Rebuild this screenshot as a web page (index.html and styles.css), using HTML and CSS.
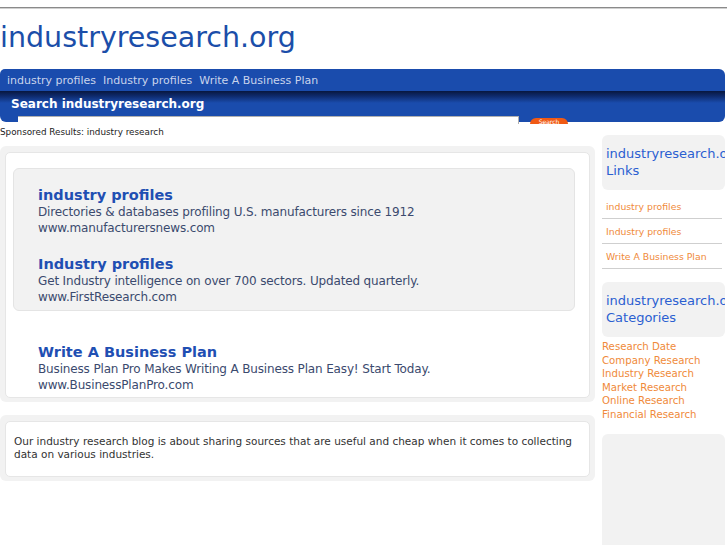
FILE: index.html
```html
<!DOCTYPE html>
<html lang="en">
<head>
    <meta charset="UTF-8">
    <title>industryresearch.org</title>
    <link rel="stylesheet" href="styles.css">
</head>
<body>
<div class="top-line"></div>
<div class="logo"><a href="">industryresearch.org</a></div>

<ul class="nav">
    <li><a href="">industry profiles</a></li>
    <li><a href="">Industry profiles</a></li>
    <li><a href="">Write A Business Plan</a></li>
</ul>

<div class="search">
    <div class="search-head">Search industryresearch.org</div>
    <div class="search-row">
        <input class="search-input" type="text" value="">
        <span class="search-btn">Search</span>
    </div>
</div>

<div class="page">
    <div class="main">
        <div class="sponsored">Sponsored Results: industry research</div>
        <div class="panel">
            <div class="panel-in">
                <div class="ads-top">
                    <div class="ad">
                        <a class="ad-title" href="">industry profiles</a>
                        <p>Directories &amp; databases profiling U.S. manufacturers since 1912</p>
                        <p>www.manufacturersnews.com</p>
                    </div>
                    <div class="ad">
                        <a class="ad-title" href="">Industry profiles</a>
                        <p>Get Industry intelligence on over 700 sectors. Updated quarterly.</p>
                        <p>www.FirstResearch.com</p>
                    </div>
                </div>
                <div class="ad ad-bottom">
                    <a class="ad-title" href="">Write A Business Plan</a>
                    <p>Business Plan Pro Makes Writing A Business Plan Easy! Start Today.</p>
                    <p>www.BusinessPlanPro.com</p>
                </div>
            </div>
        </div>
        <div class="panel panel-blog">
            <div class="panel-in blog">
                Our industry research blog is about sharing sources that are useful and cheap when it comes to collecting data on various industries.
            </div>
        </div>
    </div>

    <div class="side">
        <div class="side-box">industryresearch.org Links</div>
        <ul class="side-links">
            <li><a href="">industry profiles</a></li>
            <li><a href="">Industry profiles</a></li>
            <li><a href="">Write A Business Plan</a></li>
        </ul>
        <div class="side-box">industryresearch.org Categories</div>
        <ul class="side-cats">
            <li><a href="">Research Date</a></li>
            <li><a href="">Company Research</a></li>
            <li><a href="">Industry Research</a></li>
            <li><a href="">Market Research</a></li>
            <li><a href="">Online Research</a></li>
            <li><a href="">Financial Research</a></li>
        </ul>
        <div class="side-empty"></div>
    </div>
</div>
</body>
</html>
```

FILE: styles.css
```css
body, ul, li, p {
    margin: 0;
    padding: 0;
    list-style: none;
}

body {
    font-family: "DejaVu Sans", Verdana, sans-serif;
    background: #fff;
    overflow: hidden;
}

a {
    text-decoration: none;
}

.top-line {
    margin-top: 7px;
    height: 0;
    border-top: 1px solid #8a8a8a;
    border-bottom: 1px solid #d0d0d0;
}

.logo {
    height: 60px;
    font-size: 28.5px;
    line-height: 57px;
}
.logo a {
    color: #1b4ea9;
}

.nav {
    display: flex;
    height: 22px;
    margin-right: 2px;
    padding-left: 7px;
    background: #1a4cad;
    border-radius: 5px 6px 0 0;
}
.nav li {
    margin-right: 7px;
}
.nav a {
    font-size: 11px;
    line-height: 19px;
    color: #c9d4ec;
}

.search {
    height: 33px;
    overflow: hidden;
    margin-right: 2px;
}
.search-head {
    height: 31px;
    padding-left: 11px;
    font-size: 12px;
    font-weight: bold;
    line-height: 26px;
    color: #fff;
    background: linear-gradient(#08173f 0, #0e2a6c 5px, #1a4cad 12px, #1a4cad 100%);
    border-radius: 0 0 6px 6px;
}
.search-row {
    display: flex;
    margin-top: -6px;
    padding-left: 18px;
}
.search-input {
    width: 500px;
    height: 20px;
    margin: 0;
    padding: 0;
    border: 0;
    border-top: 1px solid #b0b0b0;
    border-right: 1px solid #b0b0b0;
    background: #fff;
}
.search-btn {
    width: 38px;
    height: 20px;
    margin: 2px 0 0 11px;
    background: #f05a14;
    border-radius: 6px;
    font-size: 6px;
    line-height: 8px;
    text-align: center;
    color: #fff;
}

.page {
    display: flex;
    margin-top: 2px;
}

.main {
    width: 595px;
}

.sponsored {
    height: 20px;
    font-size: 8.8px;
    line-height: 12px;
    color: #222;
}

.panel {
    padding: 6px 5px 4px;
    background: #f2f2f2;
    border-radius: 6px;
}
.panel-in {
    background: #fff;
    border: 1px solid #e6e6e6;
    border-radius: 5px;
}

.ads-top {
    margin: 15px 14px 0 7px;
    padding: 18px 24px 5px;
    background: #f2f2f2;
    border: 1px solid #e4e4e4;
    border-radius: 6px;
}
.ad {
    margin-bottom: 20px;
}
.ad:last-child {
    margin-bottom: 0;
}
.ad-title {
    display: block;
    font-size: 14.5px;
    font-weight: bold;
    line-height: 17px;
    color: #1f4fb3;
}
.ad p {
    font-size: 12px;
    line-height: 16px;
    letter-spacing: -0.15px;
    color: #3b4a6e;
}
.ad-bottom {
    margin: 33px 0 0 32px;
    padding-bottom: 4px;
}

.panel-blog {
    margin-top: 13px;
}
.blog {
    padding: 13px 8px 15px;
    font-size: 10.5px;
    line-height: 13px;
    color: #333;
}

.side {
    width: 123px;
    margin: 9px 0 0 7px;
    overflow: hidden;
}
.side-box {
    height: 55px;
    padding: 11px 0 0 4px;
    box-sizing: border-box;
    background: #f2f2f2;
    border-radius: 6px;
    font-size: 13px;
    line-height: 16.5px;
    color: #2b5fd1;
    overflow: hidden;
}
.side-links {
    margin-bottom: 13px;
}
.side-links li {
    height: 24px;
    margin-right: 3px;
    padding-left: 4px;
    border-bottom: 1px solid #cfcfcf;
    font-size: 9.3px;
    line-height: 25px;
}
.side-links li:first-child {
    padding-top: 4px;
}
.side-links a,
.side-cats a {
    color: #f08a3a;
}
.side-cats {
    padding-top: 3px;
    margin-bottom: 13px;
}
.side-cats li {
    font-size: 10.2px;
    line-height: 13.5px;
}
.side-empty {
    height: 200px;
    background: #f2f2f2;
    border-radius: 6px;
}
```
